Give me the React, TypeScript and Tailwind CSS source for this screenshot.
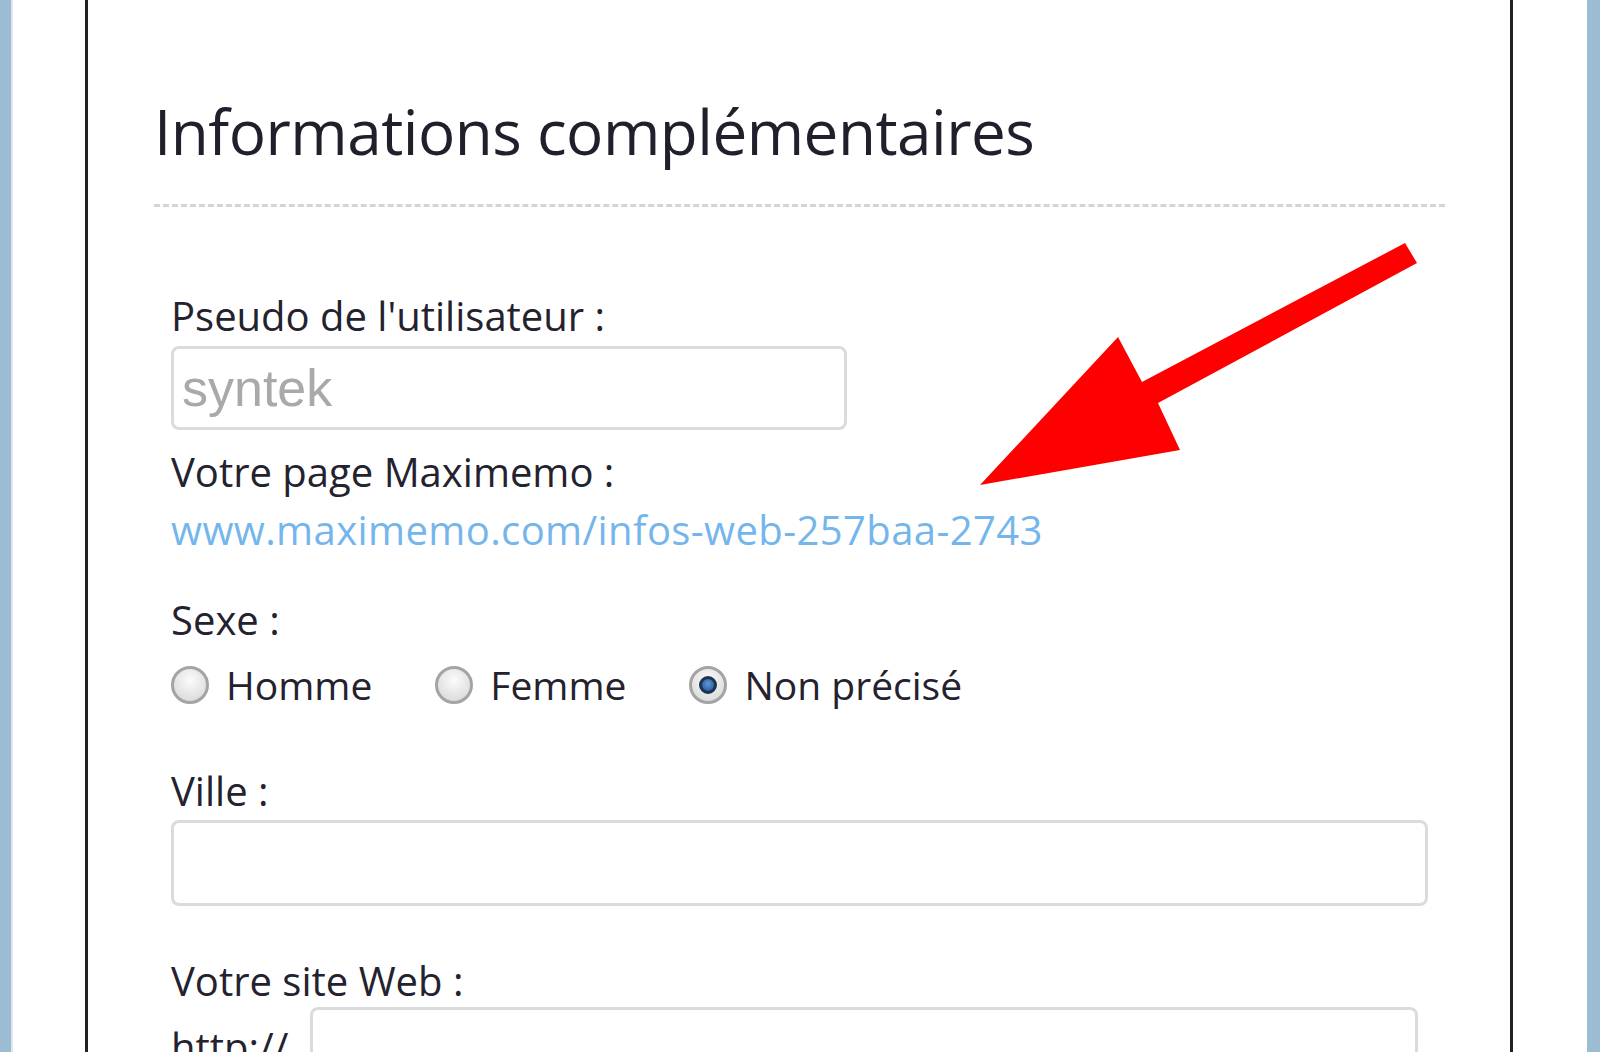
import React from 'react'

const LABEL = 'text-[40px] leading-[40px] text-[#24222e]'
const FONT = { fontFamily: '"Open Sans", "Noto Sans", sans-serif' }

function Radio({ checked }: { checked?: boolean }) {
  return (
    <span className="flex h-[38px] w-[38px] shrink-0 items-center justify-center rounded-full border-[3px] border-[#a4a4a4] bg-[radial-gradient(circle_at_50%_35%,#fbfbfb,#d4d4d4)]">
      {checked && (
        <span className="h-[18px] w-[18px] rounded-full border-[3px] border-[#1d3350] bg-[radial-gradient(circle_at_50%_40%,#5f97d6,#1c4f94)]" />
      )}
    </span>
  )
}

function Option({ label, checked }: { label: string; checked?: boolean }) {
  return (
    <label className="flex items-center gap-[17px]">
      <Radio checked={checked} />
      <span className="text-[39px] leading-[40px] text-[#24222e]">{label}</span>
    </label>
  )
}

export default function App() {
  return (
    <div className="relative flex h-[1052px] w-[1600px] overflow-hidden bg-white" style={FONT}>
      <div className="w-[13px] shrink-0 border-r-2 border-[#e2e4ee] bg-[#9bbcd3]" />
      <div className="w-[72px] shrink-0" />

      <section className="w-[1428px] shrink-0 border-x-[3px] border-[#222] pt-[100px]">
        <h1 className="ml-[66px] text-[62px] leading-[62px] tracking-[-0.5px] text-[#211f2b]">
          Informations complémentaires
        </h1>
        <div className="ml-[66px] mr-[65px] mt-[42px] border-t-[3px] border-dashed border-[#d2d4d8]" />

        <div className="ml-[83px] mt-[89px] flex flex-col">
          <span className={LABEL}>Pseudo de l'utilisateur :</span>
          <div className="mt-[10px] flex h-[84px] w-[676px] items-center rounded-[8px] border-[3px] border-[#dadcdc] pl-[8px]">
            <span className="text-[52px] text-[#a9a9a9]" style={{ fontFamily: '"Liberation Sans", Arial, sans-serif' }}>
              syntek
            </span>
          </div>

          <span className={`${LABEL} mt-[22px]`}>Votre page Maximemo :</span>
          <a className="mt-[18px] text-[40px] leading-[40px] tracking-[0.4px] text-[#74b6ec]">
            www.maximemo.com/infos-web-257baa-2743
          </a>

          <span className={`${LABEL} mt-[50px]`}>Sexe :</span>
          <div className="mt-[25px] flex items-center gap-[63px]">
            <Option label="Homme" />
            <Option label="Femme" />
            <Option label="Non précisé" checked />
          </div>

          <span className={`${LABEL} mt-[66px]`}>Ville :</span>
          <div className="mt-[9px] h-[86px] w-[1257px] rounded-[8px] border-[3px] border-[#dadcdc]" />

          <span className={`${LABEL} mt-[55px]`}>Votre site Web :</span>
          <div className="mt-[6px] flex items-start gap-[4px]">
            <span className={`${LABEL} mt-[20px] w-[135px]`}>http://</span>
            <div className="h-[84px] w-[1108px] rounded-[8px] border-[3px] border-[#dadcdc]" />
          </div>
        </div>
      </section>

      <div className="flex-1" />
      <div className="w-[13px] shrink-0 bg-[#9bbcd3]" />

      <svg className="absolute left-0 top-0" width="1600" height="1052" viewBox="0 0 1600 1052">
        <polygon
          points="980,485 1118,337 1142,382 1405,243 1417,263 1158,403 1180,450"
          fill="#ff0000"
        />
      </svg>
    </div>
  )
}
